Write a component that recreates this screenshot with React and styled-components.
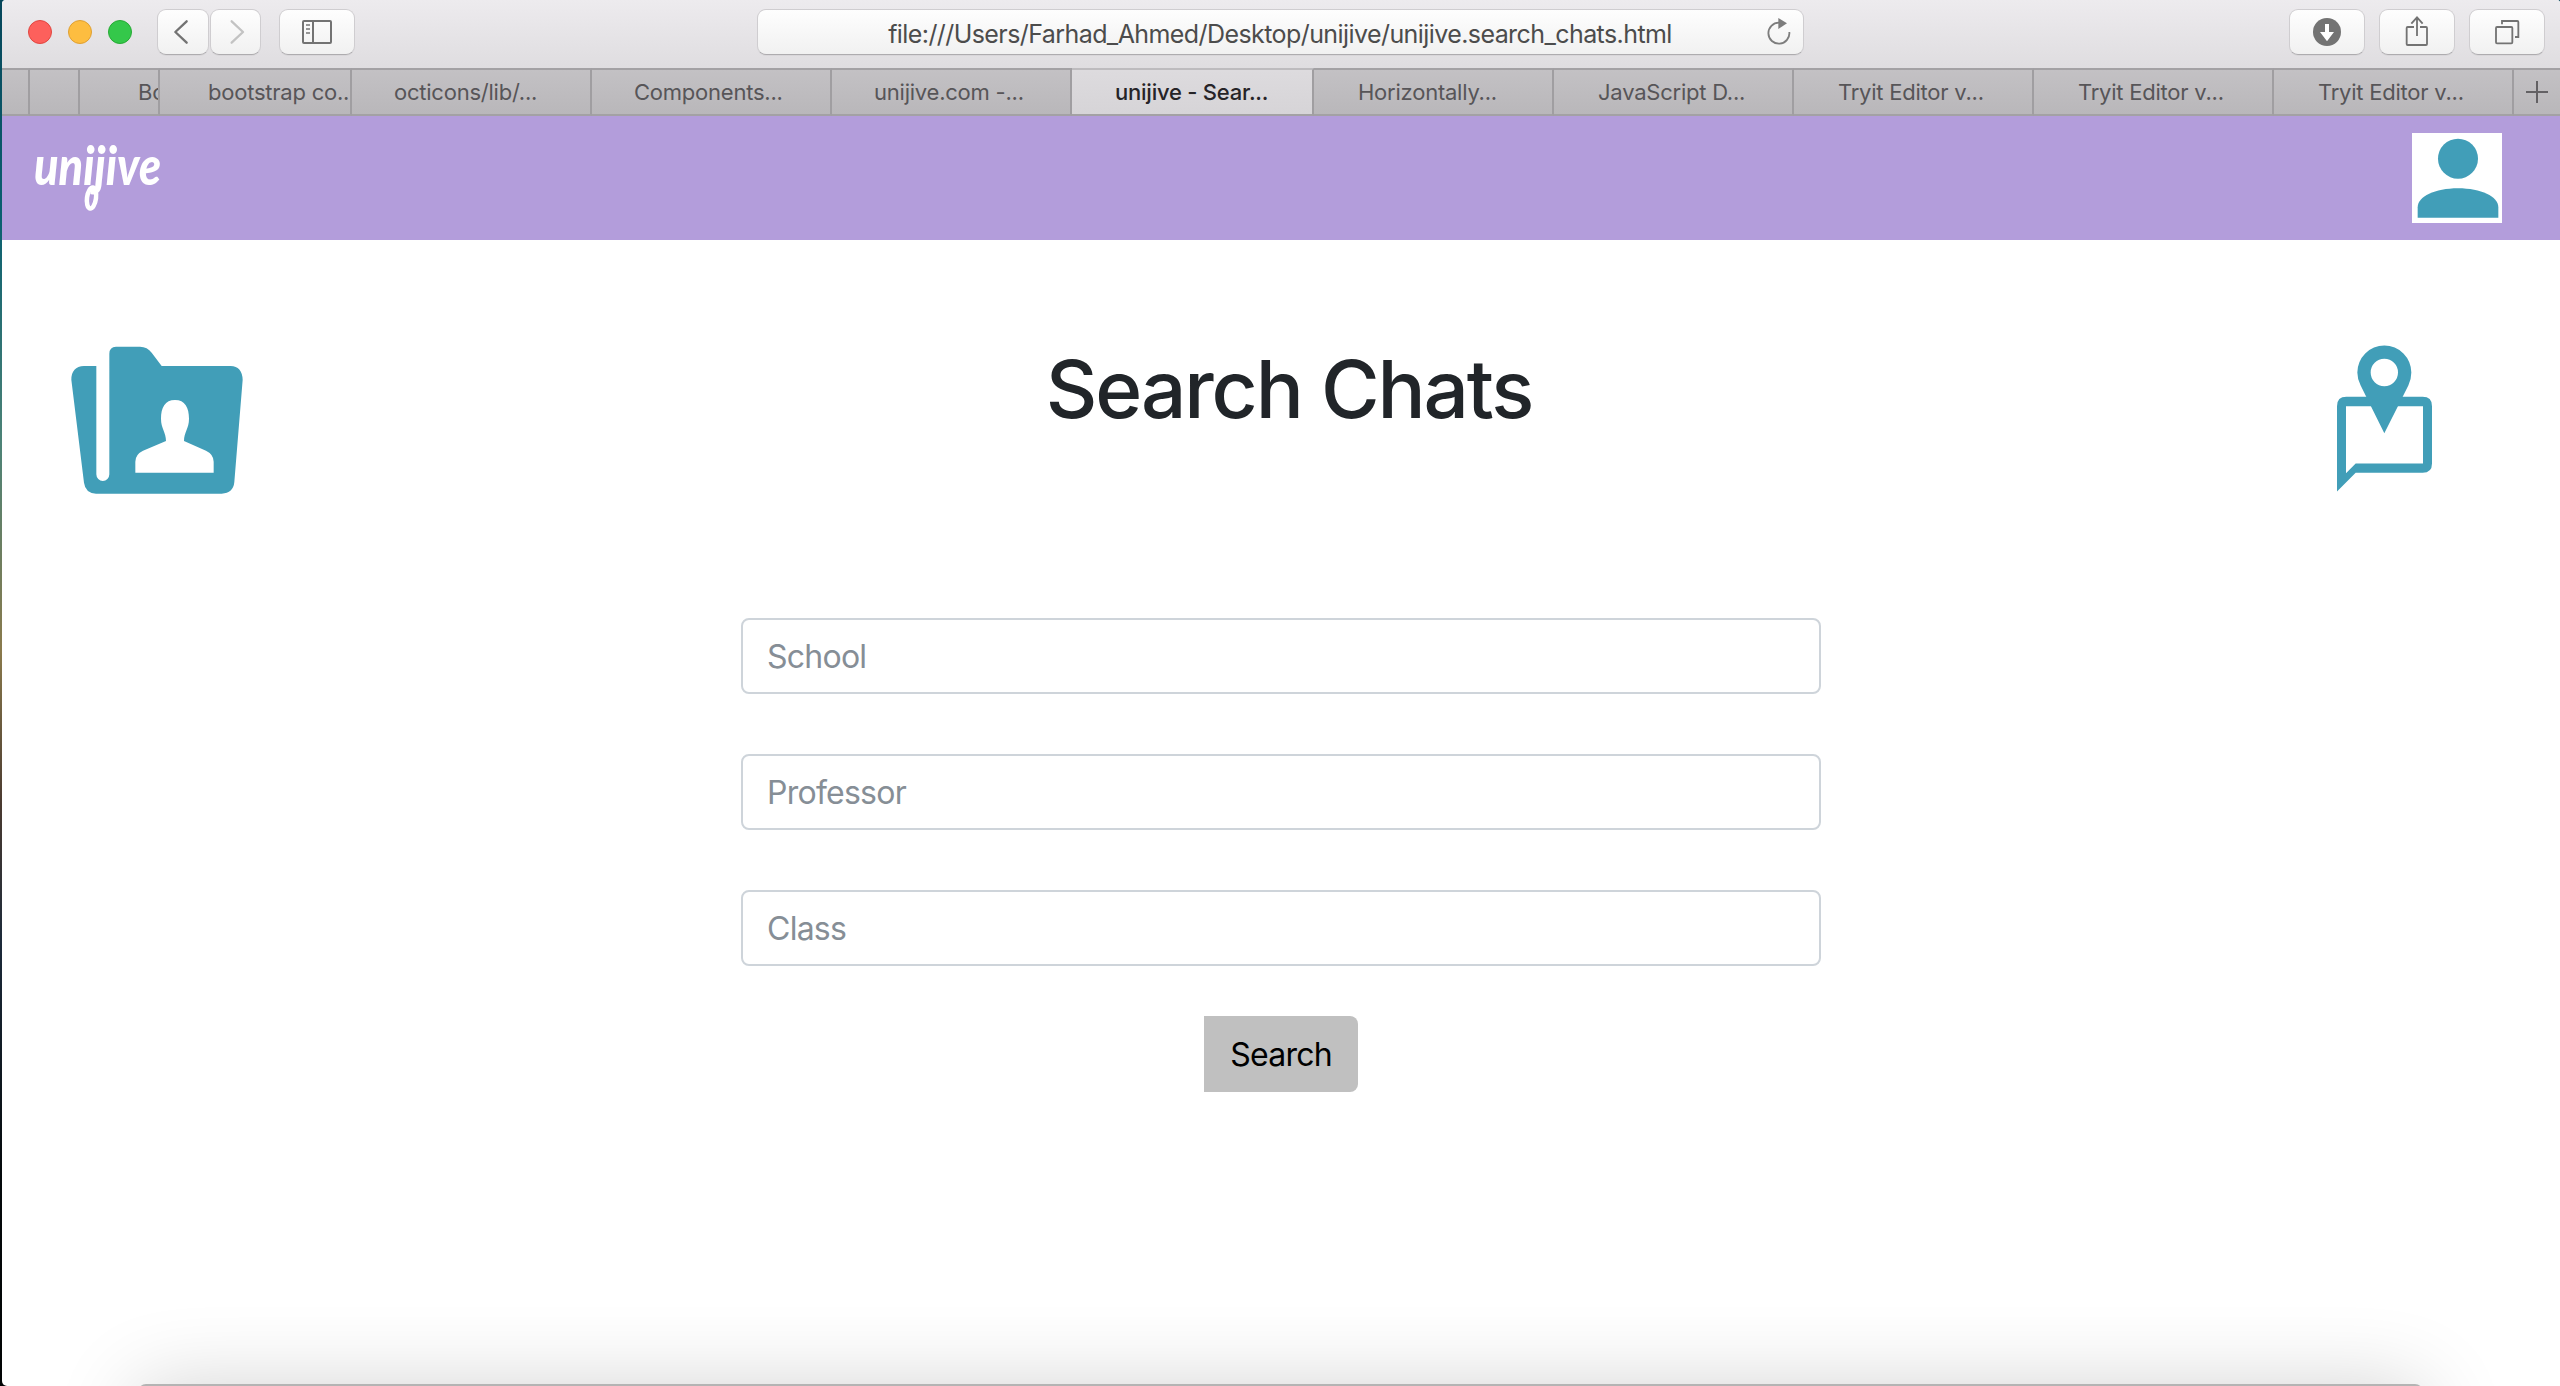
import React from "react";
import styled, { createGlobalStyle } from "styled-components";

const TEAL = "#419eb8";
const GLYPH = "#737373";

const GlobalStyle = createGlobalStyle`
  *, *::before, *::after { box-sizing: border-box; }
  html, body { margin: 0; padding: 0; overflow: hidden; }
  body { font-family: Inter, Roboto, "Liberation Sans", sans-serif; }
  svg { display: block; }
`;

const Desktop = styled.div`
  display: flex;
  width: 2560px;
  height: 1386px;
  padding-left: 2px;
  background: linear-gradient(
    180deg,
    #06465a 0%,
    #0b6070 16%,
    #4d8377 32%,
    #8a7a4c 47%,
    #4a3a30 58%,
    #1c2a3a 68%,
    #04090b 85%,
    #020404 100%
  );
`;

const Window = styled.div`
  position: relative;
  flex: 1;
  display: flex;
  flex-direction: column;
  overflow: hidden;
  border-radius: 4px 3px 0 5px;
  background: #fff;
`;

const Toolbar = styled.header`
  display: flex;
  align-items: center;
  height: 68px;
  padding: 0 15px 4px 26px;
  background: linear-gradient(180deg, #edebee 0%, #dfdde0 100%);
`;

const Lights = styled.div`
  display: flex;
  gap: 16px;
  margin-right: 25px;
`;

const Light = styled.span`
  width: 24px;
  height: 24px;
  border-radius: 50%;
  background: ${(p) => p.$fill};
  border: 1px solid ${(p) => p.$edge};
`;

const ButtonGroup = styled.div`
  display: flex;
  gap: ${(p) => p.$gap}px;
  margin-left: ${(p) => p.$push || "0"};
`;

const ToolButton = styled.button`
  width: ${(p) => p.$width}px;
  height: 46px;
  padding: 0;
  overflow: hidden;
  border: 1px solid #cfcdd0;
  border-bottom-color: #aeacaf;
  border-radius: 9px;
  background: linear-gradient(180deg, #fefefe 0%, #f1f1f1 100%);
  box-shadow: 0 1px 0 rgba(0, 0, 0, 0.04);
  svg {
    width: ${(p) => p.$width}px;
    height: 46px;
    margin: -1px;
  }
`;

const AddressBar = styled.div`
  display: grid;
  grid-template-columns: 44px 1fr 44px;
  align-items: center;
  width: 1047px;
  height: 46px;
  margin-left: 402px;
  border: 1px solid #cfcdd0;
  border-bottom-color: #aeacaf;
  border-radius: 9px;
  background: linear-gradient(180deg, #fefefe 0%, #f1f1f1 100%);
  box-shadow: 0 1px 0 rgba(0, 0, 0, 0.04);
`;

const Address = styled.span`
  grid-column: 2;
  padding: 3px 1px 0 0;
  text-align: center;
  white-space: nowrap;
  font-size: 25px;
  line-height: 30px;
  letter-spacing: -0.58px;
  color: #4c4c4c;
`;

const TabStrip = styled.nav`
  display: flex;
  height: 48px;
`;

const Tab = styled.div`
  flex: none;
  display: flex;
  align-items: center;
  width: ${(p) => p.$width}px;
  padding-left: ${(p) => p.$inset || 0}px;
  overflow: hidden;
  white-space: nowrap;
  font-size: 22px;
  font-weight: ${(p) => (p.$active ? 500 : 400)};
  letter-spacing: -0.23px;
  color: ${(p) => (p.$active ? "#262427" : "#575558")};
  border-top: 2px solid ${(p) => (p.$active ? "#bdbbbe" : "#a3a1a4")};
  border-bottom: 2px solid #a3a1a4;
  border-right: 2px solid #a09ea1;
  background: ${(p) =>
    p.$active
      ? "linear-gradient(180deg, #dddbde, #d6d4d7)"
      : "linear-gradient(180deg, #c3c1c4, #b9b7ba)"};
`;

const NewTab = styled(Tab)`
  flex: 1;
  border-right: 0;
`;

const Navbar = styled.div`
  display: flex;
  align-items: flex-start;
  justify-content: space-between;
  height: 124px;
  padding: 17px 58px 0 30px;
  background: #b39ddb;
`;

const Wordmark = styled.svg`
  width: 134px;
  height: 90px;
  text {
    font-family: Lato, "Open Sans", sans-serif;
    font-size: 53px;
    font-style: italic;
    font-weight: 900;
    fill: #fff;
  }
`;

const Avatar = styled.svg`
  width: 90px;
  height: 90px;
  background: #fff;
`;

const PageHeader = styled.section`
  display: grid;
  grid-template-columns: 172px 1fr 95px;
  align-items: start;
  height: 253px;
  margin-top: 101px;
  padding: 0 128px 0 69px;
`;

const FolderIcon = styled.svg`
  width: 172px;
  height: 148px;
  margin-top: 5px;
`;

const PinIcon = styled.svg`
  width: 95px;
  height: 147px;
  margin-top: 4px;
`;

const Title = styled.h1`
  margin: 0;
  padding-right: 2px;
  text-align: center;
  font-size: 80px;
  font-weight: 500;
  line-height: 96px;
  letter-spacing: -2.1px;
  color: #212529;
`;

const SearchForm = styled.form`
  display: flex;
  flex-direction: column;
  align-items: center;
  gap: 60px;
  padding-top: 24px;
`;

const Field = styled.input`
  width: 1080px;
  height: 76px;
  padding: 0 24px;
  border: 2px solid #ced4da;
  border-radius: 8px;
  outline: none;
  background: #fff;
  font: 400 32px/48px Inter, Roboto, sans-serif;
  letter-spacing: -0.75px;
  &::placeholder {
    color: #868e96;
    opacity: 1;
  }
`;

const SubmitButton = styled.button`
  width: 154px;
  height: 76px;
  margin-top: -10px;
  padding: 2px 0 0;
  border: 0;
  border-radius: 0 8px 8px 0;
  background: #c0c0c0;
  color: #000;
  font: 400 32px/48px Inter, Roboto, sans-serif;
  letter-spacing: -0.75px;
`;

/* Shadow cast upwards by the panel that peeks over the bottom of the window. */
const BottomShade = styled.div`
  position: absolute;
  left: 136px;
  right: 137px;
  top: 1384px;
  height: 300px;
  border-radius: 8px;
  background: #b4b4b4;
  box-shadow: 0 4px 84px rgba(0, 0, 0, 0.19);
`;

const TABS = [
  { width: 28 },
  { width: 50 },
  { width: 80, inset: 58, label: "Bo" },
  { width: 192, inset: 48, label: "bootstrap co.." },
  { width: 240, inset: 42, label: "octicons/lib/..." },
  { width: 240, inset: 42, label: "Components..." },
  { width: 240, inset: 42, label: "unijive.com -..." },
  { width: 242, inset: 43, label: "unijive - Sear...", active: true },
  { width: 240, inset: 44, label: "Horizontally..." },
  { width: 240, inset: 44, label: "JavaScript D..." },
  { width: 240, inset: 44, label: "Tryit Editor v..." },
  { width: 240, inset: 44, label: "Tryit Editor v..." },
  { width: 240, inset: 44, label: "Tryit Editor v..." },
];

const FIELDS = ["School", "Professor", "Class"];

function Chevron({ box, d, color }) {
  return (
    <svg viewBox={box} fill="none" stroke={color} strokeWidth="7" strokeLinecap="round" strokeLinejoin="round">
      <path d={d} />
    </svg>
  );
}

function BrowserToolbar() {
  return (
    <Toolbar>
      <Lights>
        <Light $fill="#fd605c" $edge="#e14640" />
        <Light $fill="#fdbd40" $edge="#dfa033" />
        <Light $fill="#34c84a" $edge="#27aa35" />
      </Lights>
      <ButtonGroup $gap={1}>
        <ToolButton $width={52} aria-label="Back">
          <Chevron box="471 27 156 138" d="M560 64 526 96 560 128" color={GLYPH} />
        </ToolButton>
        <ToolButton $width={51} aria-label="Forward">
          <Chevron box="630 27 153 138" d="M695 64 729 96 695 128" color="#c3c3c3" />
        </ToolButton>
      </ButtonGroup>
      <ButtonGroup $gap={0} $push="18px">
        <ToolButton $width={76} aria-label="Sidebar">
          <svg viewBox="837 27 228 138" fill="none" stroke={GLYPH} strokeWidth="6">
            <rect x="909" y="63" width="84" height="66" rx="3" />
            <path d="M939 63V129" />
            <path d="M918 75H930M918 87H930M918 99H930" stroke="#969696" />
          </svg>
        </ToolButton>
      </ButtonGroup>
      <AddressBar>
        <Address>file:///Users/Farhad_Ahmed/Desktop/unijive/unijive.search_chats.html</Address>
        <svg width="44" height="44" viewBox="1347 30 132 132" fill="none">
          <path d="M1438 96A31.500 31.500 0 1 1 1407 68" stroke="#7d7d7d" strokeWidth="5.500" />
          <path d="M1405 54 1431 70 1405 87Z" fill="#7d7d7d" />
        </svg>
      </AddressBar>
      <ButtonGroup $gap={14} $push="auto">
        <ToolButton $width={76} aria-label="Downloads">
          <svg viewBox="87 27 228 138">
            <circle cx="201" cy="96" r="42" fill={GLYPH} />
            <path d="M195 72H207V96H222L201 124 180 96H195Z" fill="#fff" />
          </svg>
        </ToolButton>
        <ToolButton $width={76} aria-label="Share">
          <svg viewBox="357 27 228 138" fill="none" stroke={GLYPH} strokeWidth="5.500">
            <path d="M462 81H443Q440 81 440 84V132Q440 135 443 135H498Q501 135 501 132V84Q501 81 498 81H480" />
            <path d="M471 108V52M454 71 471 52 488 71" />
          </svg>
        </ToolButton>
        <ToolButton $width={76} aria-label="Show tabs">
          <svg viewBox="627 27 228 138" fill="none" stroke={GLYPH} strokeWidth="5.500">
            <rect x="708" y="81" width="49" height="49" rx="3" />
            <path d="M726 73V63H772Q775 63 775 66V111H765" />
          </svg>
        </ToolButton>
      </ButtonGroup>
    </Toolbar>
  );
}

export default function App() {
  return (
    <>
      <GlobalStyle />
      <Desktop>
        <Window>
          <BrowserToolbar />
          <TabStrip>
            {TABS.map((tab, i) => (
              <Tab key={i} $width={tab.width} $inset={tab.inset} $active={tab.active}>
                {tab.label}
              </Tab>
            ))}
            <NewTab $inset={12}>
              <svg width="22" height="22" viewBox="0 0 22 22" stroke="#636164" strokeWidth="2">
                <path d="M11 0V22M0 11H22" />
              </svg>
            </NewTab>
          </TabStrip>
          <Navbar>
            <Wordmark viewBox="0 0 134 90">
              <text x="2" y="52" textLength="127" lengthAdjust="spacingAndGlyphs">
                unijive
              </text>
              <ellipse cx="59.500" cy="65" rx="4.500" ry="10.500" transform="rotate(8 59.500 65)" fill="none" stroke="#fff" strokeWidth="4.500" />
            </Wordmark>
            <Avatar viewBox="456 399 270 270" fill={TEAL}>
              <circle cx="594" cy="476" r="60" />
              <path d="M473 653V622C473 590 525 565 594 565S715 590 715 622V653Z" />
            </Avatar>
          </Navbar>
          <PageHeader>
            <FolderIcon viewBox="93 78 516 442" fill={TEAL}>
              <path d="M170 137H132Q94 139 94 178L132 487Q136 518 168 520H545Q580 518 583 485L608 178Q606 138 572 137H365L335 97Q322 79 300 79H228Q208 80 208 100V462A19.500 20 0 0 1 169 462V137Z" />
              <path
                d="M405 239C435 239 447 262 447 295C447 325 432 335 432 362L498 391Q521 402 521 424V457H286V424Q286 402 309 391L378 362C378 335 363 325 363 295C363 262 375 239 405 239Z"
                fill="#fff"
              />
            </FolderIcon>
            <Title>Search Chats</Title>
            <PinIcon viewBox="111 76 285 440" fill={TEAL} fillRule="evenodd">
              <path d="M111 515V259Q111 231 139 231H368Q396 231 396 259V431Q396 459 368 459H167ZM138 460V259H369V431H167Z" />
              <path d="M253 340 182 197Q172 178 172 158A81 81 0 0 1 334 158Q334 178 325 197ZM253 117A41 41 0 1 0 253 199A41 41 0 1 0 253 117Z" />
            </PinIcon>
          </PageHeader>
          <SearchForm onSubmit={(e) => e.preventDefault()}>
            {FIELDS.map((name) => (
              <Field key={name} placeholder={name} />
            ))}
            <SubmitButton type="submit">Search</SubmitButton>
          </SearchForm>
          <BottomShade />
        </Window>
      </Desktop>
    </>
  );
}
